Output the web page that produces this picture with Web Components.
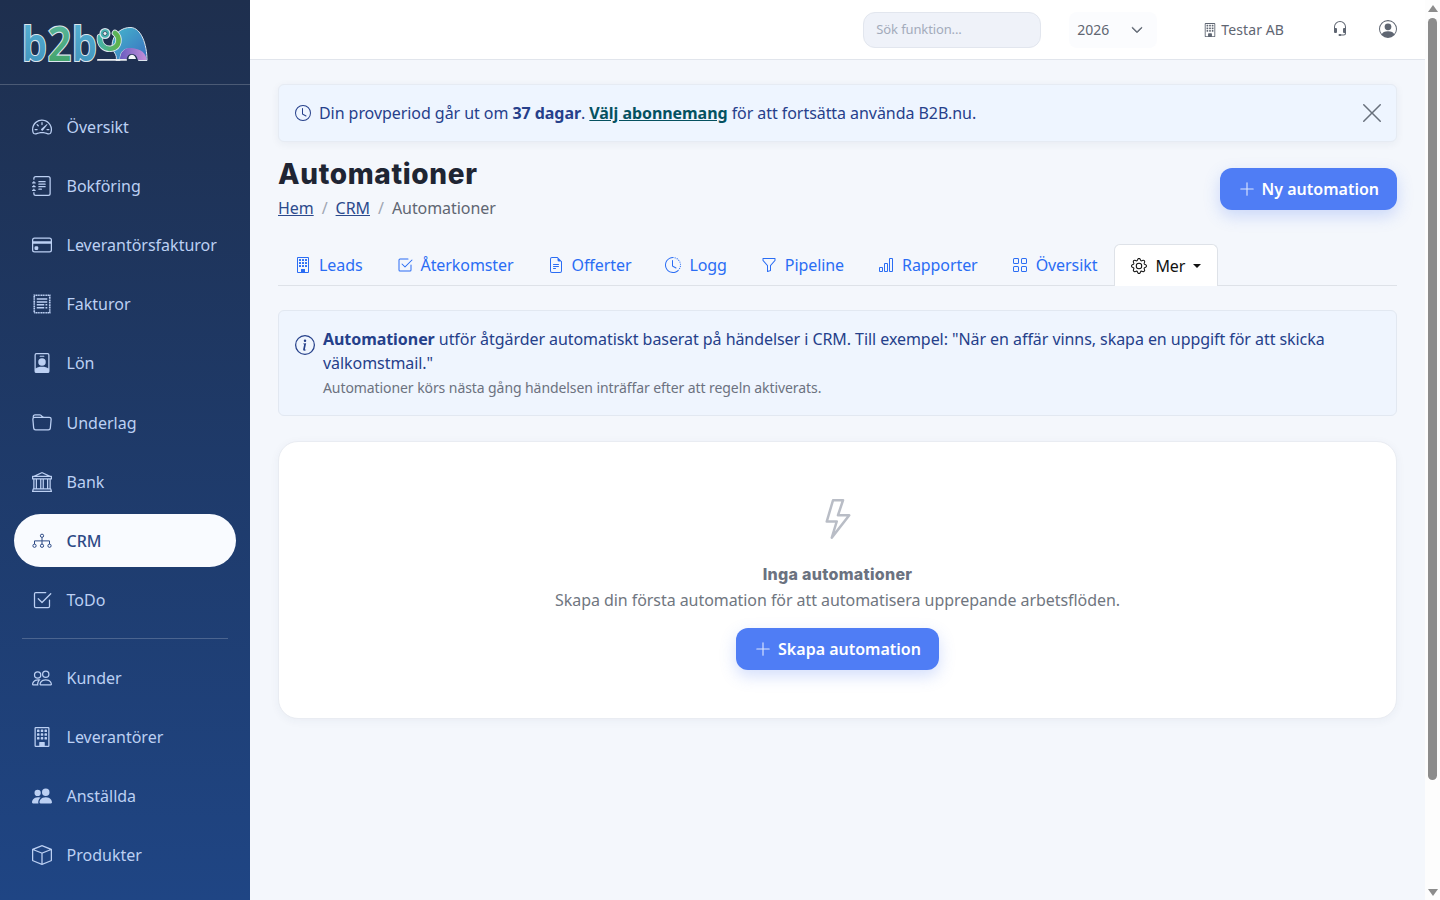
<!DOCTYPE html>
<html lang="sv">
<head>
<meta charset="utf-8">
<title>Automationer</title>
<style>
	html, body { margin: 0; height: 100%; overflow: hidden; }
	body { font-family: "Noto Sans", "Open Sans", sans-serif; font-size: 16px; line-height: 1.5; letter-spacing: -.06px; }
</style>
</head>
<body>
<app-shell>
	<side-nav slot="side">
		<nav-item icon="speedometer">Översikt</nav-item>
		<nav-item icon="journal">Bokföring</nav-item>
		<nav-item icon="card">Leverantörsfakturor</nav-item>
		<nav-item icon="receipt">Fakturor</nav-item>
		<nav-item icon="badge">Lön</nav-item>
		<nav-item icon="folder">Underlag</nav-item>
		<nav-item icon="bank">Bank</nav-item>
		<nav-item icon="diagram" active>CRM</nav-item>
		<nav-item icon="check">ToDo</nav-item>
		<nav-divider></nav-divider>
		<nav-item icon="people">Kunder</nav-item>
		<nav-item icon="building">Leverantörer</nav-item>
		<nav-item icon="peoplefill">Anställda</nav-item>
		<nav-item icon="box">Produkter</nav-item>
	</side-nav>

	<top-bar slot="top"></top-bar>

	<trial-alert>Din provperiod går ut om <b>37 dagar</b>. <a>Välj abonnemang</a> för att fortsätta använda B2B.nu.</trial-alert>
	<page-head title="Automationer" action="Ny automation"></page-head>
	<tab-bar>
		<tab-item icon="building">Leads</tab-item>
		<tab-item icon="check">Återkomster</tab-item>
		<tab-item icon="file">Offerter</tab-item>
		<tab-item icon="history">Logg</tab-item>
		<tab-item icon="funnel">Pipeline</tab-item>
		<tab-item icon="bars">Rapporter</tab-item>
		<tab-item icon="grid">Översikt</tab-item>
		<tab-item icon="gear" active caret>Mer</tab-item>
	</tab-bar>
	<info-box note="Automationer körs nästa gång händelsen inträffar efter att regeln aktiverats."><b>Automationer</b> utför åtgärder automatiskt baserat på händelser i CRM. Till exempel: "När en affär vinns, skapa en uppgift för att skicka välkomstmail."</info-box>
	<empty-card title="Inga automationer" text="Skapa din första automation för att automatisera upprepande arbetsflöden." action="Skapa automation"></empty-card>
</app-shell>

<script>
	const ICONS = {
		speedometer: `<path d="M8 4a.5.5 0 0 1 .5.5V6a.5.5 0 0 1-1 0V4.5A.5.5 0 0 1 8 4M3.732 5.732a.5.5 0 0 1 .707 0l.915.914a.5.5 0 1 1-.708.708l-.914-.915a.5.5 0 0 1 0-.707M2 10a.5.5 0 0 1 .5-.5h1.586a.5.5 0 0 1 0 1H2.5A.5.5 0 0 1 2 10m9.5 0a.5.5 0 0 1 .5-.5h1.5a.5.5 0 0 1 0 1H12a.5.5 0 0 1-.5-.5m.754-4.246a.39.39 0 0 0-.527-.02L7.547 9.31a.91.91 0 1 0 1.302 1.258l3.434-4.297a.39.39 0 0 0-.029-.518z"/><path fill-rule="evenodd" d="M0 10a8 8 0 1 1 15.547 2.661c-.442 1.253-1.845 1.602-2.932 1.25C11.309 13.488 9.475 13 8 13c-1.474 0-3.31.488-4.615.911-1.087.352-2.49.003-2.932-1.25A8 8 0 0 1 0 10m8-7a7 7 0 0 0-6.603 9.329c.203.575.923.876 1.68.63C4.397 12.533 6.358 12 8 12s3.604.532 4.923.96c.757.245 1.477-.056 1.68-.631A7 7 0 0 0 8 3"/>`,
		journal: `<path d="M5 10.5a.5.5 0 0 1 .5-.5h2a.5.5 0 0 1 0 1h-2a.5.5 0 0 1-.5-.5m0-2a.5.5 0 0 1 .5-.5h5a.5.5 0 0 1 0 1h-5a.5.5 0 0 1-.5-.5m0-2a.5.5 0 0 1 .5-.5h5a.5.5 0 0 1 0 1h-5a.5.5 0 0 1-.5-.5m0-2a.5.5 0 0 1 .5-.5h5a.5.5 0 0 1 0 1h-5a.5.5 0 0 1-.5-.5"/><path d="M3 0h10a2 2 0 0 1 2 2v12a2 2 0 0 1-2 2H3a2 2 0 0 1-2-2v-1h1v1a1 1 0 0 0 1 1h10a1 1 0 0 0 1-1V2a1 1 0 0 0-1-1H3a1 1 0 0 0-1 1v1H1V2a2 2 0 0 1 2-2"/><path d="M1 5v-.5a.5.5 0 0 1 1 0V5h.5a.5.5 0 0 1 0 1h-2a.5.5 0 0 1 0-1zm0 3v-.5a.5.5 0 0 1 1 0V8h.5a.5.5 0 0 1 0 1h-2a.5.5 0 0 1 0-1zm0 3v-.5a.5.5 0 0 1 1 0v.5h.5a.5.5 0 0 1 0 1h-2a.5.5 0 0 1 0-1z"/>`,
		card: `<path d="M0 4a2 2 0 0 1 2-2h12a2 2 0 0 1 2 2v8a2 2 0 0 1-2 2H2a2 2 0 0 1-2-2zm2-1a1 1 0 0 0-1 1v1h14V4a1 1 0 0 0-1-1zm13 4H1v5a1 1 0 0 0 1 1h12a1 1 0 0 0 1-1z"/><path d="M2 10a1 1 0 0 1 1-1h1a1 1 0 0 1 1 1v1a1 1 0 0 1-1 1H3a1 1 0 0 1-1-1z"/>`,
		receipt: `<rect x="1.8" y="1" width="12.4" height="14" fill="none" stroke="currentColor" stroke-width="1.300" stroke-dasharray="1 .35"/><path d="M3.800 3.400h8.400v1.200H3.800zM3.800 5.700h8.400v1.200H3.800zM3.800 8h6v1.200h-6zM10.800 8h1.400v1.200h-1.400zM3.800 10.300h6v1.200h-6zM10.800 10.300h1.400v1.200h-1.400z"/>`,
		badge: `<path fill-rule="evenodd" d="M3.500 0h9A1.500 1.500 0 0 1 14 1.500v13a1.500 1.500 0 0 1-1.500 1.500h-9A1.500 1.500 0 0 1 2 14.500v-13A1.500 1.500 0 0 1 3.500 0m0 1a.5.5 0 0 0-.5.5v10.800c.9-.9 2.600-1.400 5-1.400s4.100.5 5 1.400V1.500a.5.5 0 0 0-.5-.5zM6.500 2.200h3a.4.4 0 0 1 0 .8h-3a.4.4 0 0 1 0-.8M8 4.200a3 3 0 1 1 0 6 3 3 0 0 1 0-6"/>`,
		folder: `<path d="M.54 3.87.5 3a2 2 0 0 1 2-2h3.672a2 2 0 0 1 1.414.586l.828.828A2 2 0 0 0 9.828 3h3.982a2 2 0 0 1 1.992 2.181l-.637 7A2 2 0 0 1 13.174 14H2.826a2 2 0 0 1-1.991-1.819l-.637-7a2 2 0 0 1 .342-1.31zM2.19 4a1 1 0 0 0-.996 1.09l.637 7a1 1 0 0 0 .995.91h10.348a1 1 0 0 0 .995-.91l.637-7A1 1 0 0 0 13.81 4zm4.69-1.707A1 1 0 0 0 6.172 2H2.5a1 1 0 0 0-1 .981l.006.139q.323-.119.684-.12h5.396z"/>`,
		bank: `<path d="m8 0 6.61 3h.89a.5.5 0 0 1 .5.5v2a.5.5 0 0 1-.5.5H15v7a.5.5 0 0 1 .485.38l.5 2a.498.498 0 0 1-.485.62H.5a.498.498 0 0 1-.485-.62l.5-2A.5.5 0 0 1 1 13V6H.5a.5.5 0 0 1-.5-.5v-2A.5.5 0 0 1 .5 3h.89zM3.777 3h8.447L8 1zM2 6v7h1V6zm2 0v7h2.500V6zm3.500 0v7h1V6zm2 0v7H12V6zM13 6v7h1V6zm2-1V4H1v1zm-.39 9H1.390l-.25 1h13.720z"/>`,
		diagram: `<g fill="none" stroke="currentColor" stroke-width=".8"><circle cx="8" cy="3.800" r="1.300"/><circle cx="2" cy="11.800" r="1.300"/><circle cx="8" cy="11.800" r="1.300"/><circle cx="14" cy="11.800" r="1.300"/><path d="M8 5.100v5.400M2 10.500V7.900h12v2.600"/></g>`,
		check: `<path d="M3 14.500A1.500 1.500 0 0 1 1.500 13V3A1.500 1.500 0 0 1 3 1.500h8a.5.5 0 0 1 0 1H3a.5.5 0 0 0-.5.5v10a.5.5 0 0 0 .5.5h10a.5.5 0 0 0 .5-.5V8a.5.5 0 0 1 1 0v5a1.500 1.500 0 0 1-1.500 1.500z"/><path d="m8.354 10.354 7-7a.5.5 0 0 0-.708-.708L8 9.293 5.354 6.646a.5.5 0 1 0-.708.708l3 3a.5.5 0 0 0 .708 0"/>`,
		people: `<path d="M15 14s1 0 1-1-1-4-5-4-5 3-5 4 1 1 1 1zm-7.978-1L7 12.996c.001-.264.167-1.030.760-1.720C8.312 10.629 9.282 10 11 10c1.717 0 2.687.630 3.240 1.276.593.690.758 1.457.760 1.720l-.008.002-.014.002zM11 7a2 2 0 1 0 0-4 2 2 0 0 0 0 4m3-2a3 3 0 1 1-6 0 3 3 0 0 1 6 0M6.936 9.280a6 6 0 0 0-1.230-.247A7 7 0 0 0 5 9c-4 0-5 3-5 4q0 1 1 1h4.216A2.240 2.240 0 0 1 5 13c0-1.010.377-2.042 1.090-2.904.243-.294.526-.569.846-.816M4.920 10A5.500 5.500 0 0 0 4 13H1c0-.260.164-1.030.760-1.724.545-.636 1.492-1.256 3.160-1.275ZM1.500 5.500a3 3 0 1 1 6 0 3 3 0 0 1-6 0m3-2a2 2 0 1 0 0 4 2 2 0 0 0 0-4"/>`,
		peoplefill: `<path d="M7 14s-1 0-1-1 1-4 5-4 5 3 5 4-1 1-1 1zm4-6a3 3 0 1 0 0-6 3 3 0 0 0 0 6m-5.784 6A2.240 2.240 0 0 1 5 13c0-1.355.680-2.750 1.936-3.720A6.300 6.300 0 0 0 5 9c-4 0-5 3-5 4s1 1 1 1zM4.500 8a2.500 2.500 0 1 0 0-5 2.500 2.500 0 0 0 0 5"/>`,
		building: `<path d="M4 2.500a.5.5 0 0 1 .5-.5h1a.5.5 0 0 1 .5.5v1a.5.5 0 0 1-.5.5h-1a.5.5 0 0 1-.5-.5zm3 0a.5.5 0 0 1 .5-.5h1a.5.5 0 0 1 .5.5v1a.5.5 0 0 1-.5.5h-1a.5.5 0 0 1-.5-.5zm3.500-.5a.5.5 0 0 0-.5.5v1a.5.5 0 0 0 .5.5h1a.5.5 0 0 0 .5-.5v-1a.5.5 0 0 0-.5-.5zM4 5.500a.5.5 0 0 1 .5-.5h1a.5.5 0 0 1 .5.5v1a.5.5 0 0 1-.5.5h-1a.5.5 0 0 1-.5-.5zM7.500 5a.5.5 0 0 0-.5.5v1a.5.5 0 0 0 .5.5h1a.5.5 0 0 0 .5-.5v-1a.5.5 0 0 0-.5-.5zm2.500.5a.5.5 0 0 1 .5-.5h1a.5.5 0 0 1 .5.5v1a.5.5 0 0 1-.5.5h-1a.5.5 0 0 1-.5-.5zM4.500 8a.5.5 0 0 0-.5.5v1a.5.5 0 0 0 .5.5h1a.5.5 0 0 0 .5-.5v-1a.5.5 0 0 0-.5-.5zm2.500.5a.5.5 0 0 1 .5-.5h1a.5.5 0 0 1 .5.5v1a.5.5 0 0 1-.5.5h-1a.5.5 0 0 1-.5-.5zm3.500-.5a.5.5 0 0 0-.5.5v1a.5.5 0 0 0 .5.5h1a.5.5 0 0 0 .5-.5v-1a.5.5 0 0 0-.5-.5z"/><path d="M2 1a1 1 0 0 1 1-1h10a1 1 0 0 1 1 1v14a1 1 0 0 1-1 1H3a1 1 0 0 1-1-1zm11 0H3v14h3v-2.500a.5.5 0 0 1 .5-.5h3a.5.5 0 0 1 .5.5V15h3z"/><rect x="6" y="12" width="4" height="3.500"/>`,
		box: `<path d="M8.186 1.113a.5.5 0 0 0-.372 0L1.846 3.500 8 5.961 14.154 3.500zM15 4.239l-6.500 2.600v7.922l6.500-2.600V4.240zM7.500 14.762V6.838L1 4.239v7.925zM7.443.184a1.500 1.500 0 0 1 1.114 0l7.129 2.852A.5.5 0 0 1 16 3.500v8.662a1 1 0 0 1-.629.928l-7.185 2.874a.5.5 0 0 1-.372 0L.630 13.090a1 1 0 0 1-.630-.928V3.500a.5.5 0 0 1 .314-.464z"/>`,
		clock: `<path d="M8 3.500a.5.5 0 0 0-1 0V9a.5.5 0 0 0 .252.434l3.500 2a.5.5 0 0 0 .496-.868L8 8.710z"/><path d="M8 16A8 8 0 1 0 8 0a8 8 0 0 0 0 16m7-8A7 7 0 1 1 1 8a7 7 0 0 1 14 0"/>`,
		history: `<path d="M8.515 1.019A7 7 0 0 0 8 1V0a8 8 0 0 1 .589.022zm2.004.45a7 7 0 0 0-.985-.299l.219-.976q.576.129 1.126.342zm1.370.71a7 7 0 0 0-.439-.270l.493-.870a8 8 0 0 1 .979.654l-.615.789a7 7 0 0 0-.418-.302zm1.834 1.790a7 7 0 0 0-.653-.796l.724-.690q.406.429.747.910zm.744 1.352a7 7 0 0 0-.214-.468l.893-.450a8 8 0 0 1 .450 1.088l-.950.313a7 7 0 0 0-.179-.483m.530 2.507a7 7 0 0 0-.100-1.025l.985-.170q.100.580.116 1.170zm-.131 1.538q.050-.254.081-.510l.993.123a8 8 0 0 1-.230 1.155l-.964-.267q.069-.247.120-.501m-.952 2.379q.276-.436.486-.908l.914.405q-.240.540-.555 1.038zm-.964 1.205q.183-.183.350-.378l.758.653a8 8 0 0 1-.401.432z"/><path d="M8 1a7 7 0 1 0 4.950 11.950l.707.707A8.001 8.001 0 1 1 8 0z"/><path d="M7.500 3a.5.5 0 0 1 .5.5v5.210l3.248 1.856a.5.5 0 0 1-.496.868l-3.500-2A.5.5 0 0 1 7 9V3.500a.5.5 0 0 1 .5-.5"/>`,
		file: `<path d="M5.500 7a.5.5 0 0 0 0 1h5a.5.5 0 0 0 0-1zM5 9.500a.5.5 0 0 1 .5-.5h5a.5.5 0 0 1 0 1h-5a.5.5 0 0 1-.5-.5m0 2a.5.5 0 0 1 .5-.5h2a.5.5 0 0 1 0 1h-2a.5.5 0 0 1-.5-.5"/><path d="M9.500 0H4a2 2 0 0 0-2 2v12a2 2 0 0 0 2 2h8a2 2 0 0 0 2-2V4.500zm0 1v2A1.500 1.500 0 0 0 11 4.500h2V14a1 1 0 0 1-1 1H4a1 1 0 0 1-1-1V2a1 1 0 0 1 1-1z"/>`,
		funnel: `<path d="M1.500 1.500A.5.5 0 0 1 2 1h12a.5.5 0 0 1 .5.5v2a.5.5 0 0 1-.128.334L10 8.692V13.500a.5.5 0 0 1-.342.474l-3 1A.5.5 0 0 1 6 14.500V8.692L1.628 3.834A.5.5 0 0 1 1.500 3.500zm1 .5v1.308l4.372 4.858A.5.5 0 0 1 7 8.500v5.306l2-.666V8.500a.5.5 0 0 1 .128-.334L13.500 3.308V2z"/>`,
		bars: `<path d="M4 11H2v3h2zm5-4H7v7h2zm5-5v12h-2V2zm-2-1a1 1 0 0 0-1 1v12a1 1 0 0 0 1 1h2a1 1 0 0 0 1-1V2a1 1 0 0 0-1-1zM6 7a1 1 0 0 1 1-1h2a1 1 0 0 1 1 1v7a1 1 0 0 1-1 1H7a1 1 0 0 1-1-1zm-5 4a1 1 0 0 1 1-1h2a1 1 0 0 1 1 1v3a1 1 0 0 1-1 1H2a1 1 0 0 1-1-1z"/>`,
		grid: `<path d="M1 2.500A1.500 1.500 0 0 1 2.500 1h3A1.500 1.500 0 0 1 7 2.500v3A1.500 1.500 0 0 1 5.500 7h-3A1.500 1.500 0 0 1 1 5.500zM2.500 2a.5.5 0 0 0-.5.5v3a.5.5 0 0 0 .5.5h3a.5.5 0 0 0 .5-.5v-3a.5.5 0 0 0-.5-.5zm6.500.5A1.500 1.500 0 0 1 10.500 1h3A1.500 1.500 0 0 1 15 2.500v3A1.500 1.500 0 0 1 13.500 7h-3A1.500 1.500 0 0 1 9 5.500zm1.500-.5a.5.5 0 0 0-.5.5v3a.5.5 0 0 0 .5.5h3a.5.5 0 0 0 .5-.5v-3a.5.5 0 0 0-.5-.5zM1 10.500A1.500 1.500 0 0 1 2.500 9h3A1.500 1.500 0 0 1 7 10.500v3A1.500 1.500 0 0 1 5.500 15h-3A1.500 1.500 0 0 1 1 13.500zm1.500-.5a.5.5 0 0 0-.5.5v3a.5.5 0 0 0 .5.5h3a.5.5 0 0 0 .5-.5v-3a.5.5 0 0 0-.5-.5zm6.500.5A1.500 1.500 0 0 1 10.500 9h3a1.500 1.500 0 0 1 1.500 1.500v3a1.500 1.500 0 0 1-1.500 1.500h-3A1.500 1.500 0 0 1 9 13.500zm1.500-.5a.5.5 0 0 0-.5.5v3a.5.5 0 0 0 .5.5h3a.5.5 0 0 0 .5-.5v-3a.5.5 0 0 0-.5-.5z"/>`,
		gear: `<path d="M8 4.754a3.246 3.246 0 1 0 0 6.492 3.246 3.246 0 0 0 0-6.492M5.754 8a2.246 2.246 0 1 1 4.492 0 2.246 2.246 0 0 1-4.492 0"/><path d="M9.796 1.343c-.527-1.790-3.065-1.790-3.592 0l-.094.319a.873.873 0 0 1-1.255.520l-.292-.160c-1.640-.892-3.433.902-2.540 2.541l.159.292a.873.873 0 0 1-.520 1.255l-.319.094c-1.790.527-1.790 3.065 0 3.592l.319.094a.873.873 0 0 1 .520 1.255l-.160.292c-.892 1.640.901 3.434 2.541 2.540l.292-.159a.873.873 0 0 1 1.255.520l.094.319c.527 1.790 3.065 1.790 3.592 0l.094-.319a.873.873 0 0 1 1.255-.520l.292.160c1.640.893 3.434-.902 2.540-2.541l-.159-.292a.873.873 0 0 1 .520-1.255l.319-.094c1.790-.527 1.790-3.065 0-3.592l-.319-.094a.873.873 0 0 1-.520-1.255l.160-.292c.893-1.640-.902-3.433-2.541-2.540l-.292.159a.873.873 0 0 1-1.255-.520zm-2.633.283c.246-.835 1.428-.835 1.674 0l.094.319a1.873 1.873 0 0 0 2.693 1.115l.291-.160c.764-.415 1.600.420 1.184 1.185l-.159.292a1.873 1.873 0 0 0 1.116 2.692l.318.094c.835.246.835 1.428 0 1.674l-.319.094a1.873 1.873 0 0 0-1.115 2.693l.160.291c.415.764-.420 1.600-1.185 1.184l-.291-.159a1.873 1.873 0 0 0-2.693 1.116l-.094.318c-.246.835-1.428.835-1.674 0l-.094-.319a1.873 1.873 0 0 0-2.692-1.115l-.292.160c-.764.415-1.600-.420-1.184-1.185l.159-.291A1.873 1.873 0 0 0 1.945 8.930l-.319-.094c-.835-.246-.835-1.428 0-1.674l.319-.094A1.873 1.873 0 0 0 3.060 4.377l-.160-.292c-.415-.764.420-1.600 1.185-1.184l.292.159a1.873 1.873 0 0 0 2.692-1.115z"/>`,
		headset: `<path d="M8 1a5 5 0 0 0-5 5v1h1a1 1 0 0 1 1 1v3a1 1 0 0 1-1 1H3a1 1 0 0 1-1-1V6a6 6 0 1 1 12 0v6a2.500 2.500 0 0 1-2.500 2.500H9.366a1 1 0 0 1-.866.5h-1a1 1 0 1 1 0-2h1a1 1 0 0 1 .866.5H11.500A1.500 1.500 0 0 0 13 12h-1a1 1 0 0 1-1-1V8a1 1 0 0 1 1-1h1V6a5 5 0 0 0-5-5"/>`,
		person: `<path d="M11 6a3 3 0 1 1-6 0 3 3 0 0 1 6 0"/><path fill-rule="evenodd" d="M0 8a8 8 0 1 1 16 0A8 8 0 0 1 0 8m8-7a7 7 0 0 0-5.468 11.370C3.242 11.226 4.805 10 8 10s4.757 1.225 5.468 2.370A7 7 0 0 0 8 1"/>`,
		info: `<path d="M8 15A7 7 0 1 1 8 1a7 7 0 0 1 0 14m0 1A8 8 0 1 0 8 0a8 8 0 0 0 0 16"/><path d="m8.930 6.588-2.290.287-.082.380.450.083c.294.070.352.176.288.469l-.738 3.468c-.194.897.105 1.319.808 1.319.545 0 1.178-.252 1.465-.598l.088-.416c-.2.176-.492.246-.686.246-.275 0-.375-.193-.304-.533zM9 4.500a1 1 0 1 1-2 0 1 1 0 0 1 2 0"/>`,
		bolt: `<path d="M5.520.359A.5.5 0 0 1 6 0h4a.5.5 0 0 1 .474.658L8.694 6H12.500a.5.5 0 0 1 .395.807l-7 9a.5.5 0 0 1-.873-.454L6.823 9.500H3.500a.5.5 0 0 1-.480-.641zM6.374 1 4.168 8.500H7.500a.5.5 0 0 1 .478.647L6.780 13.040 11.478 7H8a.5.5 0 0 1-.474-.658L9.306 1z"/>`,
		plus: `<path d="M8 2a.5.5 0 0 1 .5.5v5h5a.5.5 0 0 1 0 1h-5v5a.5.5 0 0 1-1 0v-5h-5a.5.5 0 0 1 0-1h5v-5A.5.5 0 0 1 8 2"/>`,
		close: `<path d="M2.146 2.854a.5.5 0 1 1 .708-.708L8 7.293l5.146-5.147a.5.5 0 0 1 .708.708L8.707 8l5.147 5.146a.5.5 0 0 1-.708.708L8 8.707l-5.146 5.147a.5.5 0 0 1-.708-.708L7.293 8z"/>`,
		chevron: `<path fill-rule="evenodd" d="M1.646 4.646a.5.5 0 0 1 .708 0L8 10.293l5.646-5.647a.5.5 0 0 1 .708.708l-6 6a.5.5 0 0 1-.708 0l-6-6a.5.5 0 0 1 0-.708" stroke="currentColor" stroke-width="1.200"/>`,
	};

	function render(element, html) {
		const template = document.createElement("template");
		template.innerHTML = html;
		element.attachShadow({ mode: "open" }).appendChild(template.content.cloneNode(true));
	}

	class BIcon extends HTMLElement {
		connectedCallback() {
			const size = this.getAttribute("size") || 16;
			render(this, `
				<style>
					:host { display: inline-flex; flex: none; }
					svg { display: block; fill: currentColor; }
				</style>
				<svg width="${size}" height="${size}" viewBox="0 0 16 16">${ICONS[this.getAttribute("name")]}</svg>
			`);
		}
	}
	customElements.define("b-icon", BIcon);

	class AppShell extends HTMLElement {
		constructor() {
			super();
			render(this, `
				<style>
					:host { display: flex; height: 900px; overflow: hidden; background: #f4f7fc; }
					.column { flex: 1; min-width: 0; display: flex; flex-direction: column; }
					main { padding: 24px 28px; display: flex; flex-direction: column; }
				</style>
				<slot name="side"></slot>
				<div class="column">
					<slot name="top"></slot>
					<main><slot></slot></main>
				</div>
				<page-scrollbar></page-scrollbar>
			`);
		}
	}
	customElements.define("app-shell", AppShell);

	class PageScrollbar extends HTMLElement {
		constructor() {
			super();
			render(this, `
				<style>
					:host { display: flex; flex-direction: column; align-items: center; flex: none; width: 15px; background: #fdfdfd; }
					.up, .down { width: 0; height: 0; border-left: 5px solid transparent; border-right: 5px solid transparent; }
					.up { margin-top: 5px; border-bottom: 7px solid #8c8c8c; }
					.thumb { width: 9px; height: 762px; margin-top: 6px; border-radius: 5px; background: #8c8c8c; }
					.down { margin-top: auto; margin-bottom: 4px; border-top: 7px solid #8c8c8c; }
				</style>
				<div class="up"></div>
				<div class="thumb"></div>
				<div class="down"></div>
			`);
		}
	}
	customElements.define("page-scrollbar", PageScrollbar);

	class SideNav extends HTMLElement {
		constructor() {
			super();
			render(this, `
				<style>
					:host { display: flex; flex-direction: column; flex: none; width: 250px; height: 900px; overflow: hidden; background: linear-gradient(180deg, #1e2f4e 0%, #1f4584 100%); }
					.logo { flex: none; height: 84px; border-bottom: 1px solid rgba(255, 255, 255, .2); }
					svg { display: block; }
					text { font-family: "Noto Sans", sans-serif; font-weight: 600; font-size: 46px; stroke: #dde6ee; stroke-width: 2.200px; paint-order: stroke; }
					nav { display: flex; flex-direction: column; gap: 6px; padding: 15.500px 14px; }
				</style>
				<div class="logo">
					<svg width="170" height="84" viewBox="0 0 170 84">
						<defs>
							<linearGradient id="bee" x1="0" y1="0" x2="0" y2="1"><stop offset="0" stop-color="#58b6d8"/><stop offset="1" stop-color="#3f8fb8"/></linearGradient>
							<linearGradient id="two" x1="0" y1="0" x2="0" y2="1"><stop offset="0" stop-color="#5dbba8"/><stop offset="1" stop-color="#3f9e5e"/></linearGradient>
							<linearGradient id="trunk" x1="0" y1="0" x2="1" y2="0"><stop offset="0" stop-color="#45b3a8"/><stop offset="1" stop-color="#5fb34a"/></linearGradient>
							<linearGradient id="dome" x1="0" y1="0" x2="1" y2="1"><stop offset="0" stop-color="#45b6cc"/><stop offset="1" stop-color="#3a6fc0"/></linearGradient>
							<linearGradient id="leg" x1="0" y1="0" x2="1" y2="0"><stop offset="0" stop-color="#6a5cc0"/><stop offset="1" stop-color="#c48fd8"/></linearGradient>
						</defs>
						<text x="22" y="61" textLength="25" lengthAdjust="spacingAndGlyphs" fill="url(#bee)">b</text>
						<text x="47.500" y="61" textLength="24" lengthAdjust="spacingAndGlyphs" fill="url(#two)">2</text>
						<text x="72" y="61" textLength="25" lengthAdjust="spacingAndGlyphs" fill="url(#bee)">b</text>
						<path d="M112 46C112 34 122 27 131 27.500C141 28 147 44 147 60.500H138.500C138.500 54 134 49 128 49C122 49 120 54 120 60.500H116C118 54 112 52 112 46Z" fill="url(#dome)" stroke="#dde6ee" stroke-width="1"/>
						<path d="M120 60C120 53 124 48 129 48C136 48 146 50 146.500 60H138C137 56 135 54 132 54C128 54 127 57 126.500 60Z" fill="url(#leg)"/>
						<path d="M130 55.500C132 54 135 55 136 59H128.500C128.500 57 129 56 130 55.500Z" fill="#f3f6f8"/>
						<path d="M100 37C99 45 105 50 112 48.500C119 47 121 38 115 33" fill="none" stroke="#dde6ee" stroke-width="6.500" stroke-linecap="round"/>
						<path d="M100 37C99 45 105 50 112 48.500C119 47 121 38 115 33" fill="none" stroke="url(#trunk)" stroke-width="4.800" stroke-linecap="round"/>
						<circle cx="105" cy="33.500" r="5.500" fill="#dde6ee"/>
						<circle cx="105" cy="33.500" r="4.300" fill="#47b3b0"/>
						<circle cx="105" cy="33.500" r="2" fill="#e8f0f2" stroke="#1e2f4e" stroke-width=".7"/>
						<rect x="97" y="59" width="30" height="1.800" rx=".9" fill="#e8ecef"/>
					</svg>
				</div>
				<nav><slot></slot></nav>
			`);
		}
	}
	customElements.define("side-nav", SideNav);

	class NavItem extends HTMLElement {
		connectedCallback() {
			render(this, `
				<style>
					:host { display: flex; align-items: center; gap: 14.500px; height: 53.100px; padding-left: 18px; border-radius: 27px; color: #bcd0f3; font-size: 16px; letter-spacing: 0; }
					:host([active]) { background: #f9fbff; color: #2d4a86; font-weight: 500; }
				</style>
				<b-icon name="${this.getAttribute("icon")}" size="20"></b-icon>
				<slot></slot>
			`);
		}
	}
	customElements.define("nav-item", NavItem);

	class NavDivider extends HTMLElement {
		constructor() {
			super();
			render(this, `<style>:host { display: block; height: 1px; margin: 6px 8px; background: rgba(255, 255, 255, .2); }</style>`);
		}
	}
	customElements.define("nav-divider", NavDivider);

	class TopBar extends HTMLElement {
		constructor() {
			super();
			render(this, `
				<style>
					:host { display: flex; align-items: center; justify-content: flex-end; flex: none; box-sizing: border-box; height: 60px; padding: 0 28px 0 0; background: #fff; border-bottom: 1px solid #e1e5ec; color: #5f6672; font-size: 14px; letter-spacing: 0; }
					.search { box-sizing: border-box; width: 178px; height: 36px; padding: 1px 0 0 12px; display: flex; align-items: center; background: #eff2f9; border: 1px solid #e2e6ee; border-radius: 12px; color: #a3abbb; font-size: 13px; letter-spacing: -.12px; }
					.year { box-sizing: border-box; width: 88px; height: 36px; margin-left: 28px; padding: 0 14px 0 8px; display: flex; align-items: center; justify-content: space-between; background: #fbfcfe; border-radius: 8px; }
					.company { margin-left: 46px; display: flex; align-items: center; gap: 4px; letter-spacing: .1px; }
					.help { margin-left: 48px; margin-top: -1px; }
					.user { margin-left: 31px; margin-top: -1px; }
				</style>
				<div class="search">Sök funktion...</div>
				<div class="year">2026 <b-icon name="chevron" size="12"></b-icon></div>
				<div class="company"><b-icon name="building" size="14"></b-icon> Testar AB</div>
				<b-icon class="help" name="headset" size="16"></b-icon>
				<b-icon class="user" name="person" size="18"></b-icon>
			`);
		}
	}
	customElements.define("top-bar", TopBar);

	class TrialAlert extends HTMLElement {
		constructor() {
			super();
			render(this, `
				<style>
					:host { display: flex; align-items: center; gap: 8px; box-sizing: border-box; height: 58px; margin-bottom: 15px; padding: 0 12px 0 16px; background: #eef5ff; border: 1px solid #e6ebf3; border-radius: 6px; color: #26408b; box-shadow: 0 2px 8px rgba(30, 50, 90, .06); }
					.text { flex: 1; }
					::slotted(b) { font-weight: 700; }
					::slotted(a) { color: #055160; font-weight: 700; text-decoration: underline; }
					.close { color: #68707c; }
				</style>
				<b-icon name="clock"></b-icon>
				<div class="text"><slot></slot></div>
				<b-icon class="close" name="close" size="24"></b-icon>
			`);
		}
	}
	customElements.define("trial-alert", TrialAlert);

	class ActionButton extends HTMLElement {
		constructor() {
			super();
			render(this, `
				<style>
					:host { display: inline-flex; align-items: center; gap: 6px; flex: none; box-sizing: border-box; height: 42px; padding: 0 18px; background: #4f7df5; border-radius: 12px; color: #fff; font-size: 16px; font-weight: 600; letter-spacing: 0; box-shadow: 0 6px 16px rgba(79, 125, 245, .25); }
					b-icon { color: #dbe5fd; }
				</style>
				<b-icon name="plus" size="18"></b-icon>
				<slot></slot>
			`);
		}
	}
	customElements.define("action-button", ActionButton);

	class PageHead extends HTMLElement {
		connectedCallback() {
			render(this, `
				<style>
					:host { display: flex; align-items: center; justify-content: space-between; margin-bottom: 24px; }
					h1 { margin: 0 0 5px; font: 800 28px/34px Inter, "Noto Sans", sans-serif; letter-spacing: .65px; color: #1f2533; }
					.crumbs { display: flex; gap: 8px; color: #5f6672; }
					a { color: #2c4a8c; text-decoration: underline; }
					span { color: #a0a6b2; }
				</style>
				<div>
					<h1>${this.getAttribute("title")}</h1>
					<div class="crumbs"><a>Hem</a><span>/</span><a>CRM</a><span>/</span>${this.getAttribute("title")}</div>
				</div>
				<action-button>${this.getAttribute("action")}</action-button>
			`);
		}
	}
	customElements.define("page-head", PageHead);

	class TabBar extends HTMLElement {
		constructor() {
			super();
			render(this, `
				<style>
					:host { display: flex; border-bottom: 1px solid #dee2e8; margin-bottom: 24px; }
				</style>
				<slot></slot>
			`);
		}
	}
	customElements.define("tab-bar", TabBar);

	class TabItem extends HTMLElement {
		connectedCallback() {
			const caret = this.hasAttribute("caret") ? `<i></i>` : "";
			render(this, `
				<style>
					:host { display: flex; align-items: center; gap: 8px; height: 40px; padding: 0 16px; margin-bottom: -1px; border: 1px solid transparent; border-bottom: 0; border-radius: 6px 6px 0 0; color: #2a6df4; letter-spacing: -.08px; }
					:host([active]) { background: #fff; border-color: #dee2e8; color: #111; height: 41px; }
					i { width: 0; height: 0; border-left: 4.800px solid transparent; border-right: 4.800px solid transparent; border-top: 4.800px solid currentColor; }
				</style>
				<b-icon name="${this.getAttribute("icon")}"></b-icon>
				<slot></slot>
				${caret}
			`);
		}
	}
	customElements.define("tab-item", TabItem);

	class InfoBox extends HTMLElement {
		connectedCallback() {
			render(this, `
				<style>
					:host { display: flex; gap: 8px; padding: 16px 16px 17px; margin-bottom: 25px; background: #eff5fe; border: 1px solid #e2e8f1; border-radius: 6px; color: #25408a; letter-spacing: -.06px; }
					b-icon { margin-top: 8px; }
					.note { margin-top: 2px; font-size: 14px; line-height: 21px; letter-spacing: -.08px; color: #6c7280; }
					::slotted(b) { font-weight: 700; }
				</style>
				<b-icon name="info" size="20"></b-icon>
				<div>
					<div><slot></slot></div>
					<div class="note">${this.getAttribute("note")}</div>
				</div>
			`);
		}
	}
	customElements.define("info-box", InfoBox);

	class EmptyCard extends HTMLElement {
		connectedCallback() {
			render(this, `
				<style>
					:host { display: flex; flex-direction: column; align-items: center; padding: 57px 0 48px; background: #fff; border: 1px solid #e9ecf2; border-radius: 20px; box-shadow: 0 2px 10px rgba(30, 50, 90, .05); }
					b-icon { color: #b9bdc6; margin-bottom: 23px; }
					h2 { margin: 0; font: 800 16px/24px Inter, "Noto Sans", sans-serif; letter-spacing: .3px; color: #6b7280; }
					p { margin: 2px 0 16px; color: #70767f; }
				</style>
				<b-icon name="bolt" size="40"></b-icon>
				<h2>${this.getAttribute("title")}</h2>
				<p>${this.getAttribute("text")}</p>
				<action-button>${this.getAttribute("action")}</action-button>
			`);
		}
	}
	customElements.define("empty-card", EmptyCard);
</script>
</body>
</html>
